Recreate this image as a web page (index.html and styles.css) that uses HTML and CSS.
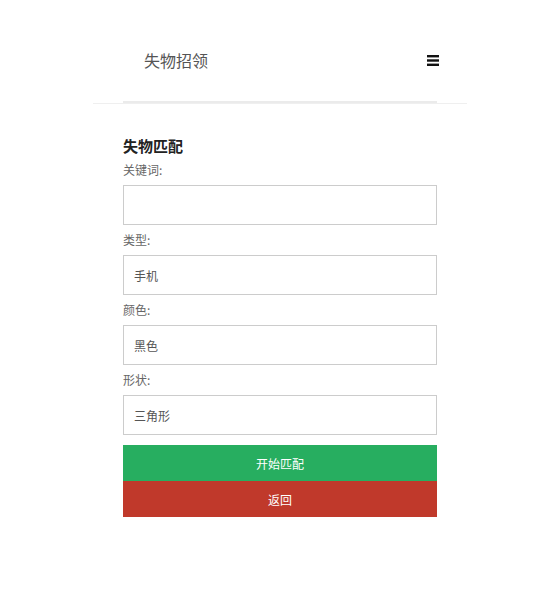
FILE: index.html
```html
<!DOCTYPE html>
<html lang="zh">
<head>
<meta charset="utf-8">
<title>失物招领</title>
<link rel="stylesheet" href="styles.css">
</head>
<body>
<div class="page">
  <header class="header">
    <div class="navbar">
      <span class="brand">失物招领</span>
      <svg class="menu" width="12" height="11" viewBox="0 0 12 11"><rect x="0" y="0" width="12" height="2.4" fill="#111"/><rect x="0" y="4.3" width="12" height="2.4" fill="#111"/><rect x="0" y="8.6" width="12" height="2.4" fill="#111"/></svg>
    </div>
  </header>
  <form class="form">
    <h2 class="title">失物匹配</h2>
    <label class="label">关键词:</label>
    <input class="field" type="text" value="">
    <label class="label">类型:</label>
    <input class="field" type="text" value="手机">
    <label class="label">颜色:</label>
    <input class="field" type="text" value="黑色">
    <label class="label">形状:</label>
    <input class="field" type="text" value="三角形">
    <div class="actions">
      <button type="button" class="btn btn-green">开始匹配</button>
      <button type="button" class="btn btn-red">返回</button>
    </div>
  </form>
</div>
</body>
</html>
```
FILE: styles.css
```css
* { box-sizing: border-box; }
body {
  margin: 0;
  background: #fff;
  font-family: "Noto Sans CJK SC", "Liberation Sans", sans-serif;
}
.page {
  margin-left: 93px;
  width: 374px;
}
.header {
  height: 104px;
  border-bottom: 1px solid #efefef;
}
.navbar {
  margin: 0 30px;
  height: 103px;
  padding: 18px 0 0 21px;
  display: flex;
  align-items: center;
  justify-content: space-between;
  border-bottom: 2px solid #ebebeb;
}
.brand {
  font-size: 16px;
  color: #555;
  line-height: 20px;
}
.menu {
  display: block;
  margin-right: -2px;
  margin-top: 1px;
}
.form {
  padding: 33px 30px 0;
  display: flex;
  flex-direction: column;
}
.title {
  margin: 0;
  font-size: 15px;
  line-height: 18px;
  font-weight: bold;
  color: #222;
}
.label {
  display: block;
  margin: 5px 0;
  font-size: 12px;
  line-height: 20px;
  color: #666;
}
.field {
  display: block;
  width: 100%;
  height: 40px;
  margin: 0;
  padding: 0 10px;
  border: 1px solid #ccc;
  border-radius: 0;
  outline: none;
  font-family: "Noto Sans CJK SC", "Liberation Sans", sans-serif;
  font-size: 12px;
  color: #555;
  background: #fff;
}
.actions {
  margin-top: 10px;
  display: flex;
  flex-direction: column;
}
.btn {
  display: block;
  width: 100%;
  height: 36px;
  margin: 0;
  border: 0;
  border-radius: 0;
  font-family: "Noto Sans CJK SC", "Liberation Sans", sans-serif;
  font-size: 12px;
  color: #fff;
  cursor: pointer;
}
.btn-green { background: #27ae60; }
.btn-red { background: #c0392b; }
```
